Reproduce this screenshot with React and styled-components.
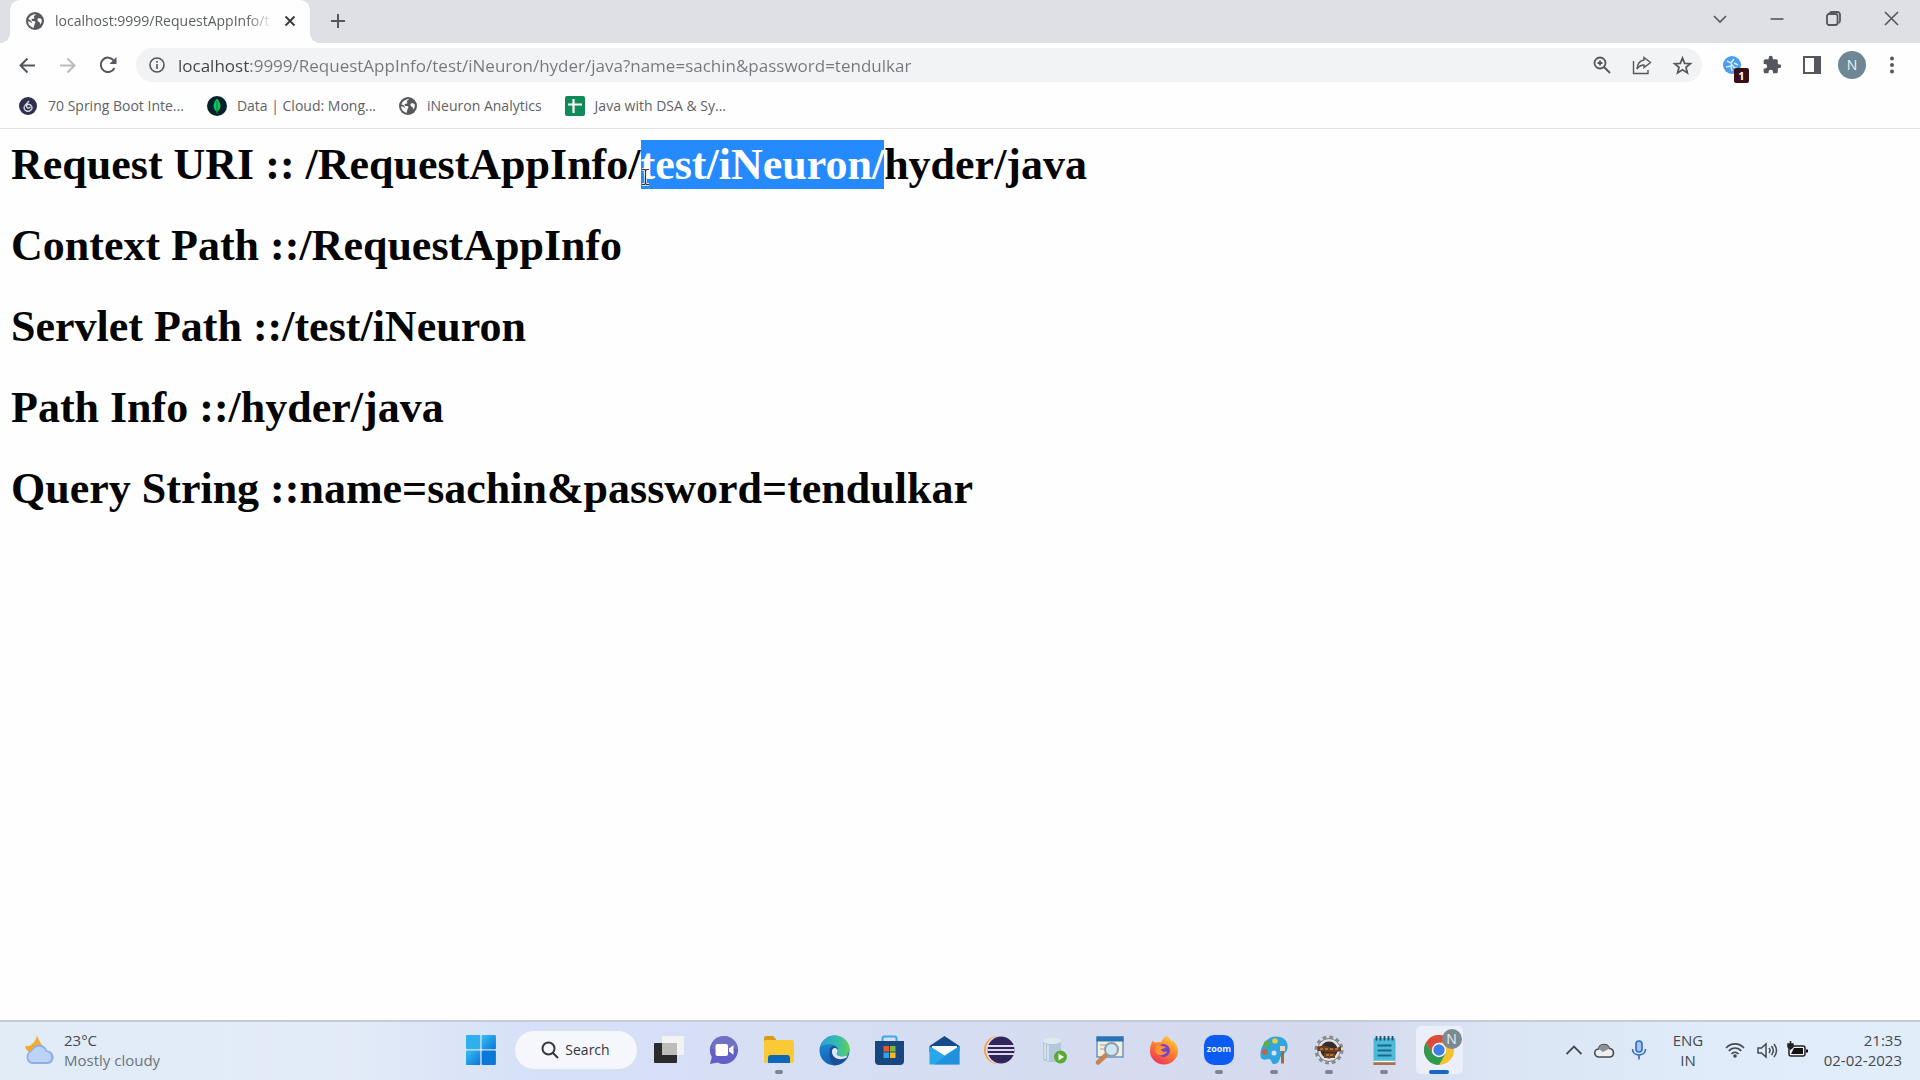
import React from "react";
import styled, { createGlobalStyle, css } from "styled-components";

const GlobalStyle = createGlobalStyle`
  * { box-sizing: border-box; }
  body { margin: 0; background: #fefefe; font-family: "Open Sans", "Noto Sans", sans-serif; }
  button { font: inherit; color: inherit; border: 0; padding: 0; background: none; }
  a { color: inherit; text-decoration: none; }
`;

/* ---------- window shell ---------- */

const Screen = styled.div`
  min-height: 100vh;
  display: flex;
  flex-direction: column;
`;

const TabStrip = styled.header`
  display: flex;
  align-items: stretch;
  height: 43px;
  padding-left: 10px;
  background: #dee0e5;
  color: #3f4246;
`;

const Tab = styled.div`
  position: relative;
  display: flex;
  align-items: center;
  width: 300px;
  padding: 0 11px 1px 16px;
  background: #fefefe;
  border-radius: 10px 10px 0 0;
  &::before, &::after {
    content: "";
    position: absolute;
    bottom: 0;
    width: 10px;
    height: 10px;
  }
  &::before { left: -10px; background: radial-gradient(circle at 0 0, transparent 10px, #fefefe 10px); }
  &::after { right: -10px; background: radial-gradient(circle at 100% 0, transparent 10px, #fefefe 10px); }
`;

const TabTitle = styled.span`
  flex: 1;
  min-width: 0;
  margin: 0 8px 0 11px;
  white-space: nowrap;
  font-size: 14px;
  line-height: 20px;
  color: #5c5f63;
  mask-image: linear-gradient(to right, #000 88%, transparent 100%);
`;

const IconButton = styled.button`
  display: flex;
  align-items: center;
  justify-content: center;
  flex: none;
  width: ${(p) => p.$w || 40}px;
  height: ${(p) => p.$h || 34}px;
  color: ${(p) => p.$color || "#54575b"};
`;

const WindowControls = styled.div`
  display: flex;
  margin-left: auto;
`;

const Toolbar = styled.nav`
  display: flex;
  align-items: center;
  height: 46px;
  padding: 0 8px 2px 7px;
  background: #fefefe;
`;

const Omnibox = styled.form`
  display: flex;
  align-items: center;
  flex: 1;
  height: 34px;
  margin: 0 10px 0 8px;
  background: #f1f3f4;
  border-radius: 17px;
`;

const Address = styled.input`
  flex: 1;
  min-width: 0;
  height: 28px;
  padding: 0;
  border: 0;
  outline: 0;
  font: 17px/24px "Open Sans", "Noto Sans", sans-serif;
  color: #74777b;
  background: linear-gradient(to right, #3f4246 73px, #74777b 73px);
  background-clip: text;
  -webkit-text-fill-color: transparent;
`;

const Extension = styled.span`
  position: relative;
  display: flex;
`;

const Badge = styled.span`
  position: absolute;
  left: 11px;
  top: 12px;
  width: 15px;
  height: 15px;
  border-radius: 2px;
  background: #3a1016;
  color: #fff;
  font-size: 11px;
  font-weight: 700;
  line-height: 15px;
  text-align: center;
`;

const Avatar = styled.span`
  width: 28px;
  height: 28px;
  border-radius: 50%;
  background: #6d8894;
  color: #eef2f4;
  font-size: 14px;
  line-height: 28px;
  text-align: center;
`;

const Bookmarks = styled.nav`
  display: flex;
  align-items: center;
  gap: 23px;
  height: 40px;
  padding: 0 18px 6px;
  background: #fefefe;
  border-bottom: 1px solid #e3e4e6;
`;

const Bookmark = styled.a`
  display: flex;
  align-items: center;
  gap: 10px;
  font-size: 14px;
  line-height: 20px;
  color: #5f6266;
`;

/* ---------- document ---------- */

const Page = styled.main`
  flex: 1;
  padding: 10px 11px 0;
  font-family: "Liberation Serif", "Times New Roman", serif;
`;

const Line = styled.h1`
  margin: 0 0 29px;
  font-size: 44px;
  line-height: 52px;
  font-weight: 700;
  color: #050505;
`;

const Selected = styled.mark`
  position: relative;
  background: #268aff;
  color: #fff;
`;

const Caret = styled.svg`
  position: absolute;
  left: 0;
  bottom: 3px;
`;

/* ---------- taskbar ---------- */

const Taskbar = styled.footer`
  display: grid;
  grid-template-columns: 1fr auto 1fr;
  align-items: center;
  height: 60px;
  padding-bottom: 2px;
  border-top: 2px solid #c5ccd6;
  background: linear-gradient(to right, #e1ecf7 0%, #e3ebf8 18%, #d6e0f7 28%, #d6def3 45%, #d4daee 70%, #dbe5f4 78%, #e0ecf9 90%, #e1edf9 100%);
  color: #45494f;
  font-size: 15px;
  line-height: 20px;
`;

const Weather = styled.button`
  display: flex;
  align-items: center;
  gap: 8px;
  padding-left: 24px;
  text-align: left;
`;

const Stack = styled.span`
  display: flex;
  flex-direction: column;
  text-align: ${(p) => p.$align || "left"};
`;

const Muted = styled.span`
  color: #6d7279;
`;

const Apps = styled.div`
  display: flex;
  align-items: center;
  height: 56px;
`;

const AppButton = styled.button`
  position: relative;
  display: flex;
  align-items: center;
  justify-content: center;
  width: 55px;
  height: 48px;
  ${(p) => p.$running && css`
    &::after {
      content: "";
      position: absolute;
      bottom: 0;
      left: 50%;
      width: ${p.$active ? 20 : 8}px;
      height: 4px;
      margin-left: ${p.$active ? -10 : -4}px;
      border-radius: 2px;
      background: ${p.$active ? "#1468c8" : "#7f8492"};
    }
  `}
`;

const ActiveTile = styled.span`
  display: flex;
  align-items: center;
  justify-content: center;
  width: 47px;
  height: 48px;
  border-radius: 5px;
  background: #eceff9;
`;

const ProfileDot = styled.span`
  position: absolute;
  right: 5px;
  top: 3px;
  width: 20px;
  height: 20px;
  border-radius: 50%;
  background: #7b8a92;
  color: #e6ecef;
  font-size: 14px;
  line-height: 20px;
`;

const SearchButton = styled.button`
  display: flex;
  align-items: center;
  justify-content: center;
  gap: 6px;
  width: 122px;
  height: 38px;
  margin: 0 5px 0 6px;
  border-radius: 19px;
  background: #f5f7fd;
  color: #33363b;
  font-size: 14px;
`;

const Tray = styled.div`
  display: flex;
  align-items: center;
  justify-content: flex-end;
  padding-right: 18px;
`;

const TrayButton = styled.button`
  display: flex;
  align-items: center;
  justify-content: ${(p) => (p.$end ? "flex-end" : "center")};
  width: ${(p) => p.$w || 30}px;
  height: 40px;
`;

/* ---------- icons ---------- */

const Icon = ({ size = 20, box = 24, sw = 2, children, ...rest }) => (
  <svg width={size} height={size} viewBox={`0 0 ${box} ${box}`} fill="none" stroke="currentColor" strokeWidth={sw} aria-hidden="true" {...rest}>
    {children}
  </svg>
);

const Globe = () => (
  <Icon size={18} box={18} sw={0}>
    <circle cx="9" cy="9" r="9" fill="#57595d" />
    <path fill="#fbfbfb" d="M10 2.200c-.4 1.100-1.700 1-2.100 1.900-.4 1 .8 1.300.3 2.200-.5.8-1.800.2-2.500 1-.5.7.2 1.700 1.200 1.600 1.300-.1 2.300.2 2.500 1.400.2 1-.9 1.200-.9 2.200 0 1.100-.8 1.500-.7 3.200-3.300-.5-5.700-3.200-5.700-6.500 2 .1 3.300 1.200 4.100 2.400C5.500 8 3.700 8 2.500 7.600 3.200 4.300 6.400 1.900 10 2.200zM12 6.500c1-.7 2.800-.4 3.700 1.100.3 1.800-.2 3.600-1.300 5-.3-1.200-.3-2.100-1.300-2.500-1.200-.5-2.400-2.500-1.100-3.600z" />
  </Icon>
);

const ICONS = {
  start: (
    <Icon size={30} box={30} sw={0}>
      <defs>
        <linearGradient id="win" x1="0" y1="0" x2="1" y2="1">
          <stop offset="0" stopColor="#39bdf3" /><stop offset="1" stopColor="#0a76d8" />
        </linearGradient>
      </defs>
      <rect x="0" y="0" width="14.300" height="14.300" rx="1" fill="#2fb0ee" />
      <rect x="15.600" y="0" width="14.300" height="14.300" rx="1" fill="url(#win)" />
      <rect x="0" y="15.600" width="14.300" height="14.300" rx="1" fill="url(#win)" />
      <rect x="15.600" y="15.600" width="14.300" height="14.300" rx="1" fill="#0978d9" />
    </Icon>
  ),
  view: (
    <Icon size={30} box={30} sw={0}>
      <rect x="0" y="8" width="23" height="20" rx="1" fill="#2b2b2d" />
      <rect x="8" y="1" width="22" height="19" rx="1" fill="#f2f3f3" />
      <rect x="8" y="8" width="15" height="12" fill="#bcbdb9" />
    </Icon>
  ),
  chat: (
    <Icon size={30} box={30} sw={0}>
      <path d="M15 1a14 14 0 1 1-6.500 26.400L1 29l1.800-7A14 14 0 0 1 15 1z" fill="#625fc6" />
      <path d="M15 1a14 14 0 0 1 14 13H2A14 14 0 0 1 15 1z" fill="#7579bf" opacity=".7" />
      <rect x="6.500" y="9" width="12.500" height="12" rx="2" fill="#fff" />
      <path d="M20 13.500l4.500-3.300v9.600L20 16.500z" fill="#fff" />
    </Icon>
  ),
  folder: (
    <Icon size={32} box={32} sw={0}>
      <path d="M1 4a2 2 0 0 1 2-2h7l3 3v5H1z" fill="#d99a18" />
      <rect x="1" y="6" width="30" height="23" rx="2" fill="#fbc836" />
      <path d="M5 29v-5a3 3 0 0 1 3-3h16a3 3 0 0 1 3 3v5z" fill="#0d68b5" />
    </Icon>
  ),
  edge: (
    <Icon size={31} box={31} sw={0}>
      <defs>
        <linearGradient id="edgeTop" x1="0" y1="0" x2="1" y2="0"><stop offset="0" stopColor="#2b9fd0" /><stop offset=".6" stopColor="#35bcae" /><stop offset="1" stopColor="#62cf52" /></linearGradient>
        <linearGradient id="edgeSide" x1="0" y1="0" x2="0" y2="1"><stop offset="0" stopColor="#2094d8" /><stop offset="1" stopColor="#1261b5" /></linearGradient>
      </defs>
      <circle cx="15.500" cy="15.500" r="15" fill="url(#edgeSide)" />
      <path d="M1 12.500C2.500 5.500 8.500.5 15.500.5c9 0 15 6.500 15 13.500 0 5-4 7.500-8 7.500-3 0-5-.9-5-2.200 0-.9 1.500-1.500 1.500-3.800 0-3.500-3.700-6.200-8.200-6.200-4 0-7.800 1-9.800 3.200z" fill="url(#edgeTop)" />
      <path d="M10.500 16c0-3 2.200-5 4.200-5 2.800.3 4.300 2.300 4.300 4.500 0 2.300-1.500 2.900-1.500 3.800 0 1.300 2 2.700 5 2.700 2.200 0 4.500-.8 6-1.700-2.300 6-7.500 9.900-12 9.900-4 0-7-7-6-14.200z" fill="#1b4e96" />
      <path d="M13 16c.2-2.600 2.500-3.700 4.300-2.500 2.300 1.600 1.500 3.700.6 4.800-.8 1 .8 3.200 5 3.200 2.300 0 4.600-.7 5.800-1.700l-1.400 3C19 26.500 12.500 22 13 16z" fill="#dce7f8" />
    </Icon>
  ),
  store: (
    <Icon size={31} box={31} sw={0}>
      <path d="M8.500 7V3.500a2 2 0 0 1 2-2h10a2 2 0 0 1 2 2V7" stroke="#3aa9e6" strokeWidth="2" />
      <path d="M1 6h29v20a4 4 0 0 1-4 4H5a4 4 0 0 1-4-4z" fill="#18477f" />
      <rect x="9.500" y="11" width="5.500" height="5.500" fill="#ea5630" /><rect x="16" y="11" width="5.500" height="5.500" fill="#7fb932" />
      <rect x="9.500" y="17.500" width="5.500" height="5.500" fill="#2ba4e8" /><rect x="16" y="17.500" width="5.500" height="5.500" fill="#f5b928" />
    </Icon>
  ),
  mail: (
    <Icon size={31} box={31} sw={0}>
      <path d="M.5 11L15.500 1l15 10v6H.5z" fill="#144a8c" />
      <path d="M3 11h25v8l-12 6L3 17z" fill="#f8fafc" />
      <path d="M.5 11l15 9.500 15-9.500v18.500H.5z" fill="#2aa7ea" />
      <path d="M30.500 11v18.500H5z" fill="#1a86d8" opacity=".65" />
    </Icon>
  ),
  eclipse: (
    <Icon size={32} box={32} sw={0}>
      <circle cx="15" cy="16" r="14" fill="#f5a14a" /><circle cx="17" cy="16" r="14" fill="#e8e6f1" /><circle cx="18" cy="16" r="13.500" fill="#30265c" />
      <path d="M5 12h26.500M4.500 16h27M5 20h26.500" stroke="#dcd7ea" strokeWidth="2.200" />
    </Icon>
  ),
  db: (
    <Icon size={28} box={28} sw={0}>
      <path d="M3 5c0-5 18-5 18 0v18c0 4-18 4-18 0z" fill="#b4c8d9" />
      <path d="M3 5c0-5 18-5 18 0 0 4-18 4-18 0z" fill="#dde8ef" />
      <path d="M8 9v16M5 8v15" stroke="#dbe8f2" strokeWidth="1.500" />
      <circle cx="20.500" cy="21" r="6.500" fill="#58aa35" /><path d="M18.500 17.500l5.500 3.500-5.500 3.500z" fill="#f2faee" />
    </Icon>
  ),
  inspect: (
    <Icon size={30} box={30} sw={0}>
      <rect x="3" y="2" width="26" height="20" fill="#f1eedb" stroke="#4c83b8" strokeWidth="1.200" /><rect x="2.500" y="1.500" width="27" height="5" fill="#2a72b9" />
      <path d="M6 10h7M6 14h6" stroke="#b9bfae" strokeWidth="1.500" />
      <path d="M4 27.500l8-7.500" stroke="#c78353" strokeWidth="4.500" strokeLinecap="round" />
      <circle cx="17.500" cy="14.500" r="6.500" fill="#cfe6f0" stroke="#8b9dab" strokeWidth="2" />
    </Icon>
  ),
  firefox: (
    <Icon size={30} box={30} sw={0}>
      <defs><linearGradient id="fox" x1=".9" y1="0" x2=".3" y2="1"><stop offset="0" stopColor="#ffdf3f" /><stop offset=".45" stopColor="#ff8a2c" /><stop offset="1" stopColor="#f03458" /></linearGradient></defs>
      <path d="M18 1c3 2 4 4 4.500 6 1-1 1-1.500 1-2C27 8 29 12 29 16a14 13.500 0 0 1-28 0C1 12 2 8 4 5.500c.3 1 1 1.800 2 2.200 2-.8 4.500-.8 6-.2C13 5 15 2 18 1z" fill="url(#fox)" />
      <circle cx="14.500" cy="15.500" r="6.500" fill="#7b43c8" />
      <path d="M7 11c4-2 7 1 10 .8-1 2-4 1.700-5 3 .5 2.200 4 3 6 1.200-1 5-10 6-11.500 0z" fill="#ff9432" />
    </Icon>
  ),
  paint: (
    <Icon size={31} box={31} sw={0}>
      <path d="M17 1.500c8 0 12.500 5 11.500 11.500-.8 6-5.500 5.500-7 9-1 2.600-1.500 7-6.500 7-3 0-2-4-4.500-5-3 0-6 2-8.500-1C-.5 17 5 1.500 17 1.500z" fill="#30a5de" />
      <circle cx="8" cy="9" r="3.200" fill="#5fae48" /><circle cx="16" cy="6" r="2.800" fill="#eccb3e" /><circle cx="6" cy="17" r="3" fill="#b86a42" /><circle cx="15" cy="18" r="2.500" fill="#d7e2f3" />
      <path d="M23.500 14v14.500" stroke="#a56b34" strokeWidth="3" /><path d="M21 11h5v5h-5z" fill="#e7d7be" />
    </Icon>
  ),
  gear: (
    <Icon size={30} box={30} sw={0}>
      <circle cx="15" cy="15" r="13" fill="#dfe1e8" stroke="#8a8b90" strokeWidth="3" strokeDasharray="3.800 3" /><circle cx="15" cy="15" r="11.500" fill="#e0e2e9" stroke="#77787d" strokeWidth="1" />
      <circle cx="15" cy="15" r="8.500" fill="#352a2d" />
      <path d="M3 12q6-3 12 0t12-1v5q-6 2-12 1T4 16z" fill="#6b3f20" /><path d="M10 18h11v5H10z" fill="#70421f" />
      <path d="M6 14h3m2 0h3m2 0h3m2 0h3M12 20h3m1 0h3" stroke="#c0813f" strokeWidth="1.400" />
    </Icon>
  ),
  notepad: (
    <Icon size={31} box={31} sw={0}>
      <rect x="4.500" y="3" width="22" height="25" rx="1.500" fill="#4dbbd8" /><path d="M4.500 27h22v3h-22z" fill="#a86f4b" /><path d="M4.500 26.500h22" stroke="#f2f4f4" strokeWidth="1.500" />
      <path d="M7.500 1v4.500M11.500 1v4.500M15.500 1v4.500M19.500 1v4.500M23.500 1v4.500" stroke="#234c64" strokeWidth="1.800" />
      <path d="M8.500 10.500h14M8.500 15.500h14M8.500 20.500h14" stroke="#17688a" strokeWidth="1.800" />
    </Icon>
  ),
  chrome: (
    <Icon size={30} box={30} sw={0}>
      <circle cx="15" cy="15" r="15" fill="#f6c12f" />
      <path d="M2 7.500A15 15 0 0 1 28 7.500H15L8.500 18.800z" fill="#dd4a3b" />
      <path d="M2 7.500A15 15 0 0 0 15 30l6.500-11.200H8.500z" fill="#2d9a4f" />
      <circle cx="15" cy="15" r="7.200" fill="#fff" /><circle cx="15" cy="15" r="5.700" fill="#3d7fe6" />
    </Icon>
  ),
};

const ZoomTile = styled.span`
  width: 30px;
  height: 30px;
  border-radius: 10px;
  background: #0d5cf2;
  color: #eaf1ff;
  font-size: 9px;
  font-weight: 700;
  line-height: 28px;
  text-align: center;
`;

const APPS = [
  ["view", "Task view"], ["chat", "Chat"], ["folder", "File Explorer", true], ["edge", "Edge"], ["store", "Store"],
  ["mail", "Mail"], ["eclipse", "Eclipse"], ["db", "Database"], ["inspect", "Inspector"], ["firefox", "Firefox"],
  ["zoom", "Zoom", true], ["paint", "Paint", true], ["gear", "Tools", true], ["notepad", "Notepad", true],
];

const BOOKMARKS = [
  ["70 Spring Boot Inte...", (
    <Icon key="s" size={20} box={20} sw={0}><circle cx="10" cy="10" r="9" fill="#2d2f4c" /><path d="M11 5L7 9.500a4 3.500 0 1 0 3.500-1.200c-2 0-2.500 2-1.500 3.200s3 .5 3.500-.7" stroke="#d2d4df" strokeWidth="1.400" /></Icon>
  )],
  ["Data | Cloud: Mong...", (
    <Icon key="m" size={20} box={20} sw={0}><circle cx="10" cy="10" r="10" fill="#06212b" /><path d="M10 2.500c5 5.500 4 10.500 0 13.500-4-3-5-8 0-13.500z" fill="#10c45c" /><path d="M10 5v13" stroke="#0a7e42" strokeWidth="1" /></Icon>
  )],
  ["iNeuron Analytics", <Globe key="g" />],
  ["Java with DSA & Sy...", (
    <Icon key="j" size={20} box={20} sw={0}><rect width="20" height="20" rx="2" fill="#108a56" /><path d="M8.500 3v14M3 8.500h14" stroke="#fff" strokeWidth="2.200" /></Icon>
  )],
];

const LINES = [
  "Context Path ::/RequestAppInfo",
  "Servlet Path ::/test/iNeuron",
  "Path Info ::/hyder/java",
  "Query String ::name=sachin&password=tendulkar",
];

export default function App() {
  return (
    <Screen>
      <GlobalStyle />
      <TabStrip>
        <Tab>
          <Globe />
          <TabTitle>localhost:9999/RequestAppInfo/t</TabTitle>
          <IconButton $w={18} $h={24} $color="#3b3d40" aria-label="Close tab">
            <Icon size={12} box={12} sw={2}><path d="M1.500 1.500l9 9M10.500 1.500l-9 9" /></Icon>
          </IconButton>
        </Tab>
        <IconButton $w={55} $h={42} aria-label="New tab">
          <Icon size={16} box={16} sw={2}><path d="M8 1v14M1 8h14" /></Icon>
        </IconButton>
        <WindowControls>
          <IconButton $w={57} $h={37} aria-label="Search tabs"><Icon size={14} box={14} sw={1.6}><path d="M1 4l6 6 6-6" /></Icon></IconButton>
          <IconButton $w={57} $h={37} aria-label="Minimize"><Icon size={14} box={14} sw={1.6}><path d="M.5 7h13" /></Icon></IconButton>
          <IconButton $w={57} $h={37} aria-label="Restore"><Icon size={15} box={15} sw={1.8}><rect x="1" y="3" width="10.500" height="11" rx="2" /><path d="M3.500 2.500Q4 1 6 1h5q3 0 3 3v5.500q0 2-1.500 2.500" /></Icon></IconButton>
          <IconButton $w={58} $h={37} aria-label="Close"><Icon size={15} box={15} sw={1.6}><path d="M1 1l13 13M14 1L1 14" /></Icon></IconButton>
        </WindowControls>
      </TabStrip>

      <Toolbar>
        <IconButton aria-label="Back"><Icon size={17} box={17}><path d="M16 8.500H2M8.500 1.500l-7 7 7 7" /></Icon></IconButton>
        <IconButton $color="#b9bbbe" aria-label="Forward"><Icon size={17} box={17}><path d="M1 8.500h14M8.500 1.500l7 7-7 7" /></Icon></IconButton>
        <IconButton $w={41} aria-label="Reload">
          <Icon size={18} box={18}><path d="M15.500 12A7.200 7.200 0 1 1 14.800 4.500" /><path d="M17.500 1v7h-7z" fill="currentColor" stroke="none" /></Icon>
        </IconButton>
        <Omnibox onSubmit={(e) => e.preventDefault()}>
          <IconButton type="button" $w={42} aria-label="Site information">
            <Icon size={16} box={16} sw={1.6}><circle cx="8" cy="8" r="7" /><path d="M8 7v5M8 4v1.800" /></Icon>
          </IconButton>
          <Address aria-label="Address" defaultValue="localhost:9999/RequestAppInfo/test/iNeuron/hyder/java?name=sachin&password=tendulkar" />
          <IconButton type="button" aria-label="Zoom">
            <Icon size={18} box={18} sw={1.8}><circle cx="7" cy="7" r="5.500" /><path d="M11 11l6 6M7 4.500v5M4.500 7h5" /></Icon>
          </IconButton>
          <IconButton type="button" aria-label="Share">
            <Icon size={20} box={20} sw={1.4}><path d="M1.500 6v12.500H16V15" /><path d="M12 2.500l6.500 5-6.500 5V10c-3 0-5 1-7 4 .5-5 3-8.500 7-9z" /></Icon>
          </IconButton>
          <IconButton type="button" aria-label="Bookmark">
            <Icon size={21} box={24} sw={2}><path d="M12 3.500l2.500 6 6.500.5-5 4.200 1.600 6.300L12 17l-5.600 3.500L8 14.200 3 10l6.500-.5z" /></Icon>
          </IconButton>
        </Omnibox>
        <IconButton aria-label="Extension">
          <Extension>
            <Icon size={18} box={18} sw={0}><circle cx="9" cy="9" r="9" fill="#4a9df0" /><path d="M4 5l4 2 3-4M3 11l5-1 1 5M11 7l4 2M10 11l5 2M8 8l3 3" stroke="#d7ebff" strokeWidth="1.500" /></Icon>
            <Badge>1</Badge>
          </Extension>
        </IconButton>
        <IconButton aria-label="Extensions">
          <Icon size={20} box={24} sw={0}><path fill="currentColor" d="M20.500 11H19V7a2 2 0 0 0-2-2h-4V3.500a2.500 2.500 0 0 0-5 0V5H4a2 2 0 0 0-2 2v3.800h1.500a2.700 2.700 0 0 1 0 5.400H2V20a2 2 0 0 0 2 2h3.800v-1.500a2.700 2.700 0 0 1 5.400 0V22H17a2 2 0 0 0 2-2v-4h1.500a2.500 2.500 0 0 0 0-5z" /></Icon>
        </IconButton>
        <IconButton aria-label="Side panel">
          <Icon size={18} box={18} sw={2}><rect x="1" y="1" width="16" height="16" /><path d="M11 1h6v16h-6z" fill="currentColor" stroke="none" /></Icon>
        </IconButton>
        <IconButton aria-label="Profile"><Avatar>N</Avatar></IconButton>
        <IconButton aria-label="Menu">
          <Icon size={18} box={18} sw={0}><g fill="currentColor"><circle cx="9" cy="2.500" r="2" /><circle cx="9" cy="9" r="2" /><circle cx="9" cy="15.500" r="2" /></g></Icon>
        </IconButton>
      </Toolbar>

      <Bookmarks>
        {BOOKMARKS.map(([label, icon]) => (
          <Bookmark href="#" key={label}>{icon}{label}</Bookmark>
        ))}
      </Bookmarks>

      <Page>
        <Line>
          Request URI :: /RequestAppInfo/<Selected>test/iNeuron/
            <Caret width="9" height="18" viewBox="0 0 9 18" fill="none" aria-hidden="true">
              <path d="M1 1.500h2.500l1 1 1-1H8M4.500 2.500v13M1 16.500h2.500l1-1 1 1H8" stroke="#fff" strokeWidth="2.500" />
              <path d="M1 1.500h2.500l1 1 1-1H8M4.500 2.500v13M1 16.500h2.500l1-1 1 1H8" stroke="#333" strokeWidth="1.200" />
            </Caret>
          </Selected>hyder/java
        </Line>
        {LINES.map((text) => <Line key={text}>{text}</Line>)}
      </Page>

      <Taskbar>
        <Weather>
          <Icon size={32} box={32} sw={0}>
            <path d="M13 1c1 5 5 8 5 12L8 19C4 18 2 16 1 12c6 1 11-4 12-11z" fill="#f3ab2e" />
            <path d="M8 30a7 7 0 0 1-.5-13.500C10 8.500 21 9 23 16.500A6.800 6.800 0 0 1 24 30z" fill="#8eaeea" />
            <path d="M8 28a5.500 5.500 0 0 1 0-10.500c3-7 12-6 14 .5A5.200 5.200 0 0 1 24 28z" fill="#bcd2f6" />
          </Icon>
          <Stack><span>23°C</span><Muted>Mostly cloudy</Muted></Stack>
        </Weather>
        <Apps>
          <AppButton aria-label="Start">{ICONS.start}</AppButton>
          <SearchButton>
            <Icon size={18} box={18} sw={2}><circle cx="7.500" cy="7.500" r="6" /><path d="M12 12l5 5" /></Icon>
            Search
          </SearchButton>
          {APPS.map(([id, label, running]) => (
            <AppButton key={id} aria-label={label} $running={running}>
              {id === "zoom" ? <ZoomTile>zoom</ZoomTile> : ICONS[id]}
            </AppButton>
          ))}
          <AppButton aria-label="Chrome" $running $active>
            <ActiveTile>{ICONS.chrome}</ActiveTile>
            <ProfileDot>N</ProfileDot>
          </AppButton>
        </Apps>
        <Tray>
          <TrayButton aria-label="Show hidden icons"><Icon size={16} box={16} sw={1.8}><path d="M.5 12L8 4.500l7.500 7.500" /></Icon></TrayButton>
          <TrayButton aria-label="OneDrive">
            <Icon size={21} box={21} sw={1.6}><path d="M5 17a4 4 0 0 1-.5-8C6 3.500 13 3 15.500 8.500A4.300 4.300 0 0 1 16 17z" fill="#eceeef" /><path d="M4.500 9C6 3.500 13 3 15.500 8.500L9 12z" fill="#8e9194" stroke="none" /></Icon>
          </TrayButton>
          <TrayButton $w={40} aria-label="Microphone">
            <Icon size={20} box={20} sw={1.6} color="#2f69c4"><rect x="7" y="1" width="6" height="11" rx="3" fill="#a8c5f1" /><path d="M3.500 9c0 8 13 8 13 0M10 15v4.500" /></Icon>
          </TrayButton>
          <TrayButton $w={58}><Stack $align="center"><span>ENG</span><span>IN</span></Stack></TrayButton>
          <TrayButton $w={35} aria-label="Network">
            <Icon size={20} box={20} sw={1.6}><path d="M1 8c5-5.500 13-5.500 18 0M3.800 11c3.500-4 9-4 12.400 0M6.500 14c2-2.400 5-2.400 7 0" /><circle cx="10" cy="16" r="1.800" fill="currentColor" stroke="none" /></Icon>
          </TrayButton>
          <TrayButton aria-label="Volume">
            <Icon size={21} box={21} sw={1.5}><path d="M1 8h3.500L9 4v13l-4.500-4H1z" /><path d="M12 8q2 2.500 0 5M14.500 6q3.500 4.500 0 9M17 4q5 6.500 0 13" /></Icon>
          </TrayButton>
          <TrayButton aria-label="Battery">
            <Icon size={21} box={21} sw={1.5}><rect x="2" y="6" width="16" height="10" rx="2" fill="#efefef" stroke="#222" /><path d="M7 8h9v6H4z" fill="#111" stroke="none" /><path d="M19 9.500h2v3h-2z" fill="#111" stroke="none" /><path d="M3.500 1v3M1 4h5v3L3.500 9 1 7z" fill="#222" stroke="#222" /></Icon>
          </TrayButton>
          <TrayButton $w={90} $end><Stack $align="right"><span>21:35</span><span>02-02-2023</span></Stack></TrayButton>
        </Tray>
      </Taskbar>
    </Screen>
  );
}
